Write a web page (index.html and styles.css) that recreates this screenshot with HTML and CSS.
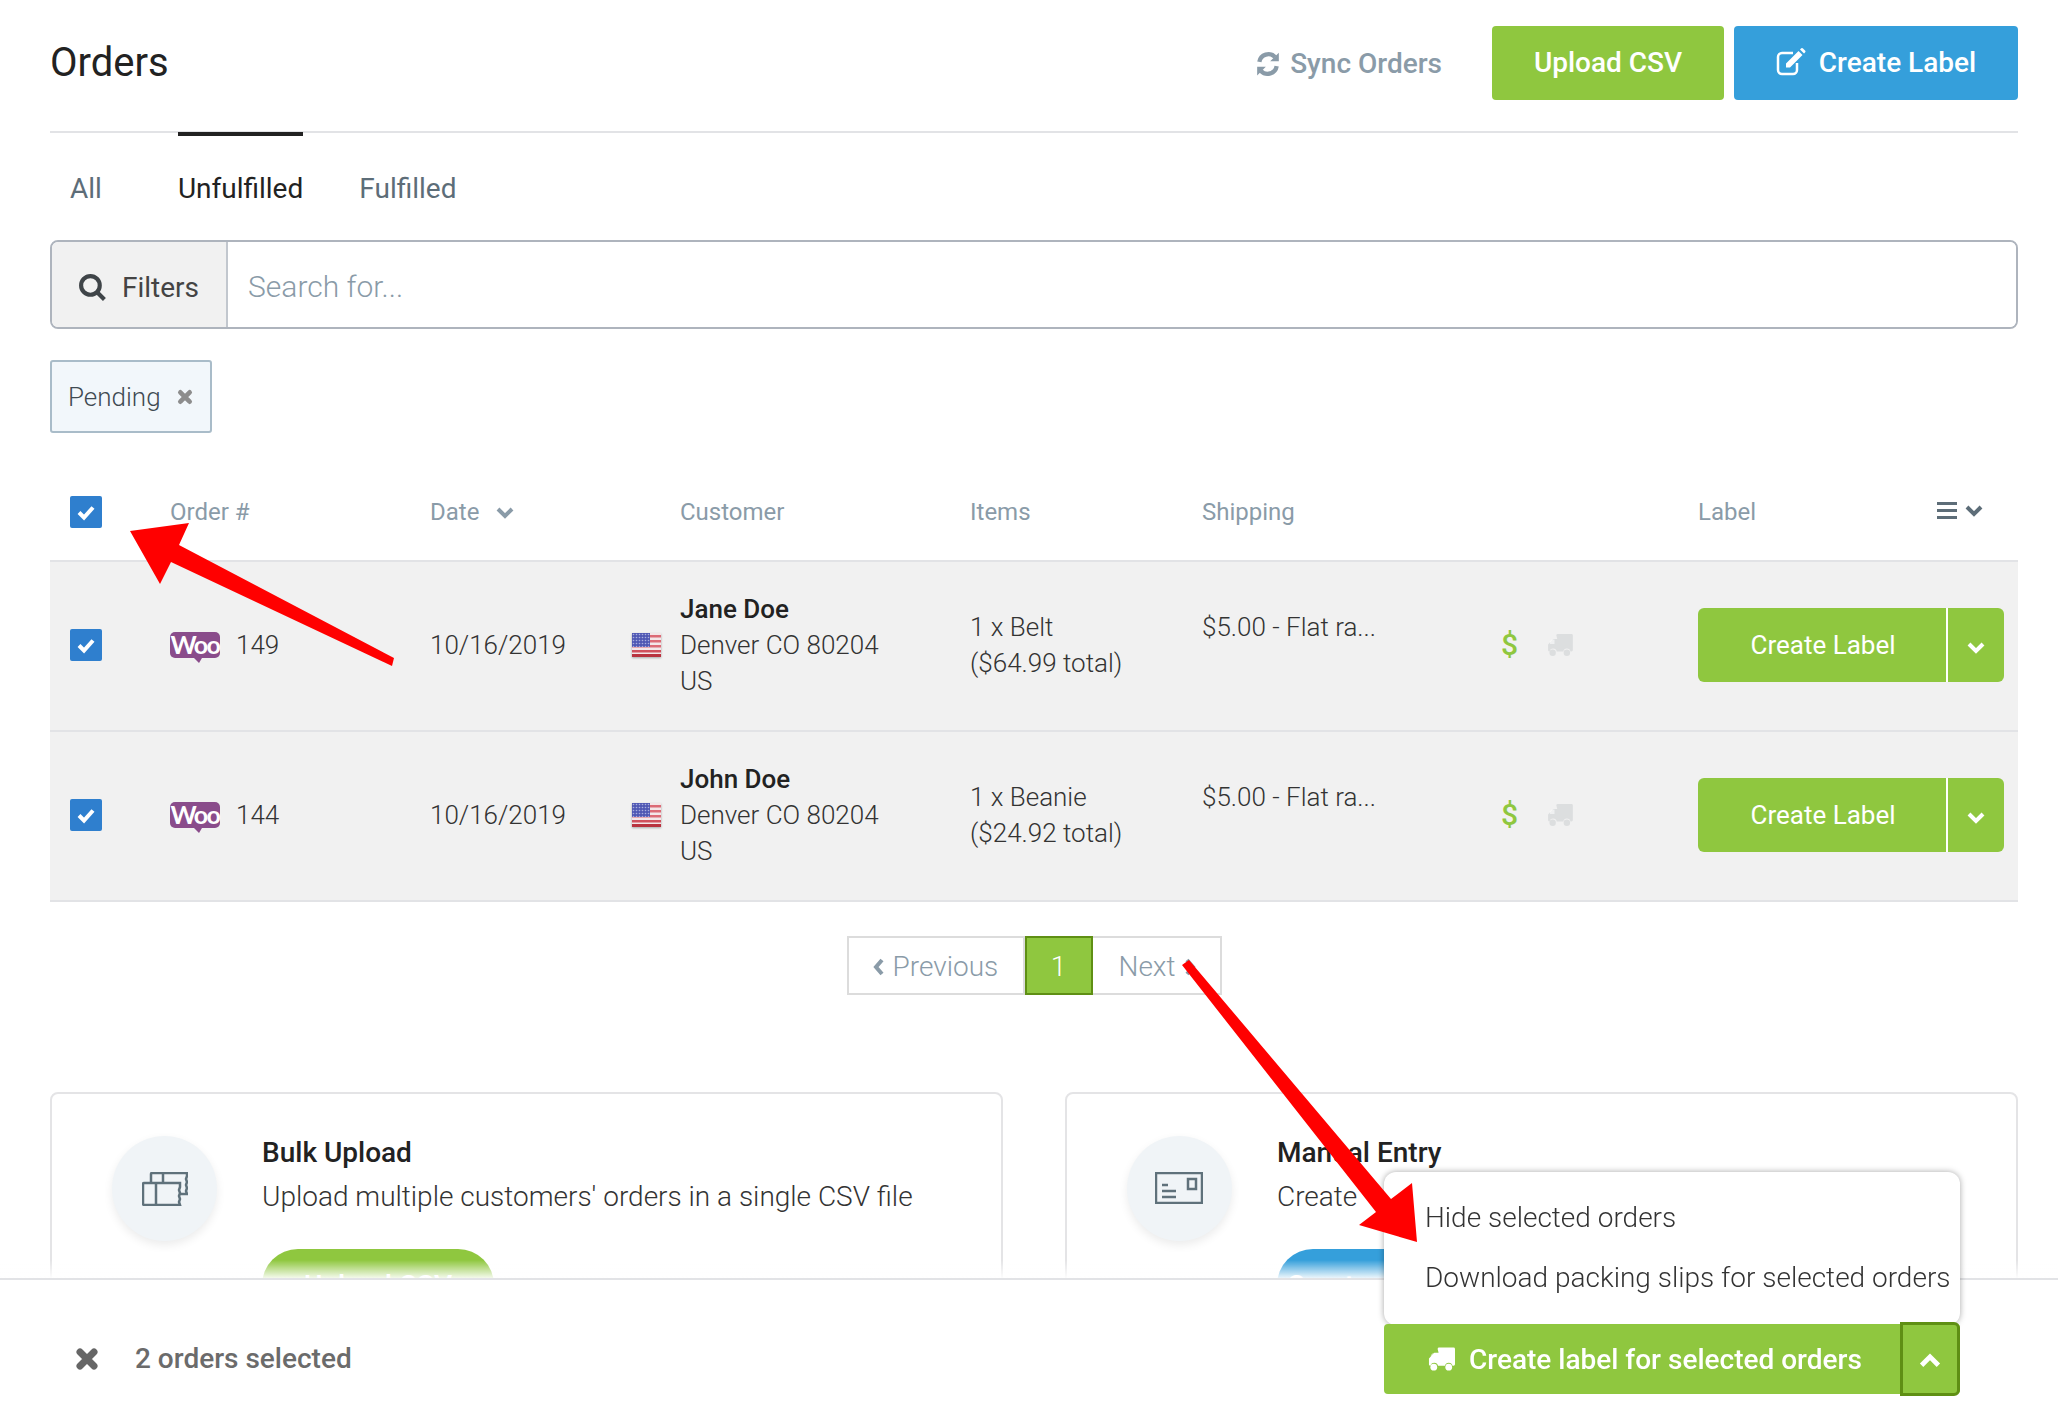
FILE: index.html
```html
<!DOCTYPE html>
<html lang="en">
<head>
    <meta charset="UTF-8">
    <meta name="viewport" content="width=device-width, initial-scale=1.0">
    <title>Orders</title>
    <link rel="stylesheet" href="styles.css">
</head>
<body>
    <svg width="0" height="0" class="sprites">
        <defs>
            <pattern id="stars" width="3" height="3" patternUnits="userSpaceOnUse">
                <rect width="3" height="3" fill="#4f58b4"/>
                <circle cx="1.500" cy="1.500" r=".8" fill="#a9aede"/>
            </pattern>
        </defs>
        <symbol id="truck" viewBox="0 0 28 24">
            <path d="M10 1.500a1.500 1.500 0 0 1 1.500-1.500h15a1.500 1.500 0 0 1 1.500 1.500v16a1.500 1.500 0 0 1-1.500 1.500h-1.100a4 4 0 0 0-7.800 0h-7.200a4 4 0 0 0-7.800 0h-.6a2 2 0 0 1-1-1v-6.500l5.500-6h4.500z"/>
            <path d="M3 7.800v3.200h5v-5h-3.200z" fill="rgba(255,255,255,.55)"/>
            <circle cx="6" cy="20.500" r="3.500"/>
            <circle cx="21.500" cy="20.500" r="3.500"/>
        </symbol>
    </svg>

    <main class="page">
        <header class="page-head">
            <h1>Orders</h1>
            <a class="sync-link">
                <svg class="sync-icon" viewBox="0 0 24 24"><path d="M4 10a8.500 8.500 0 0 1 14.500-4.500M20 14a8.500 8.500 0 0 1-14.500 4.500"/><path class="solid" d="M22 1.500v8h-8zM2 22.500v-8h8z"/></svg>
                Sync Orders
            </a>
            <button class="btn btn-green btn-csv">Upload CSV</button>
            <button class="btn btn-blue btn-label">
                <svg class="edit-icon" viewBox="0 0 30 28"><path d="M21 15v7a4 4 0 0 1-4 4H6a4 4 0 0 1-4-4V9a4 4 0 0 1 4-4h11"/><path class="solid" d="M10 15.500 22.500 3l4 4L14 19.500h-4zM24 1.500l1-1a1.400 1.400 0 0 1 2 0l2 2a1.400 1.400 0 0 1 0 2l-1 1z"/></svg>
                Create Label
            </button>
        </header>

        <nav class="tabs">
            <a class="tab tab-all">All</a>
            <a class="tab active">Unfulfilled</a>
            <a class="tab">Fulfilled</a>
        </nav>

        <div class="search-bar">
            <div class="filters">
                <svg class="search-icon" viewBox="0 0 28 28"><circle cx="12" cy="12" r="9"/><path d="m18.500 18.500 7 7"/></svg>
                Filters
            </div>
            <input class="search-input" type="text" placeholder="Search for...">
        </div>

        <div class="chip">Pending <svg class="x-icon chip-x" viewBox="0 0 24 24"><path d="M5 5l14 14M19 5 5 19"/></svg></div>

        <div class="grid-row table-head">
            <span class="checkbox"><svg viewBox="0 0 32 32"><path d="m9 16.500 5 5 9-10"/></svg></span>
            <span>Order #</span>
            <span>Date <svg class="chev date-chev" viewBox="0 0 20 14"><path d="m3 3 7 7 7-7"/></svg></span>
            <span class="head-customer">Customer</span>
            <span>Items</span>
            <span>Shipping</span>
            <span></span>
            <span>Label</span>
            <svg class="columns-icon" viewBox="0 0 48 20"><path d="M0 2.500h20M0 9.500h20M0 16.500h20"/><path class="columns-chev" d="m30 6 7 7 7-7"/></svg>
        </div>

        <div class="grid-row order-row">
            <span class="checkbox"><svg viewBox="0 0 32 32"><path d="m9 16.500 5 5 9-10"/></svg></span>
            <span class="order-no"><span class="woo">Woo</span> 149</span>
            <span>10/16/2019</span>
            <div class="customer">
                <svg class="flag" viewBox="0 0 29 24"><rect width="29" height="24" fill="#f3e6e8"/><path d="M0 2h29v2.500H0zM0 7h29v2.500H0zM0 12h29v2.500H0z" fill="#dc6b76"/><path d="M0 17h29v2.500H0z" fill="#d0505c"/><path d="M0 21h29v3H0z" fill="#b8323e"/><rect width="18" height="14" fill="url(#stars)"/></svg>
                <div><strong>Jane Doe</strong><br>Denver CO 80204<br>US</div>
            </div>
            <div>1 x Belt<br>($64.99 total)</div>
            <div class="shipping">$5.00 - Flat ra...</div>
            <div class="status-icons"><span class="paid">$</span><svg class="truck-icon"><use href="#truck"/></svg></div>
            <div class="split-btn">
                <button class="split-main">Create Label</button>
                <button class="split-toggle"><svg class="chev" viewBox="0 0 20 14"><path d="m3 3 7 7 7-7"/></svg></button>
            </div>
        </div>

        <div class="grid-row order-row">
            <span class="checkbox"><svg viewBox="0 0 32 32"><path d="m9 16.500 5 5 9-10"/></svg></span>
            <span class="order-no"><span class="woo">Woo</span> 144</span>
            <span>10/16/2019</span>
            <div class="customer">
                <svg class="flag" viewBox="0 0 29 24"><rect width="29" height="24" fill="#f3e6e8"/><path d="M0 2h29v2.500H0zM0 7h29v2.500H0zM0 12h29v2.500H0z" fill="#dc6b76"/><path d="M0 17h29v2.500H0z" fill="#d0505c"/><path d="M0 21h29v3H0z" fill="#b8323e"/><rect width="18" height="14" fill="url(#stars)"/></svg>
                <div><strong>John Doe</strong><br>Denver CO 80204<br>US</div>
            </div>
            <div>1 x Beanie<br>($24.92 total)</div>
            <div class="shipping">$5.00 - Flat ra...</div>
            <div class="status-icons"><span class="paid">$</span><svg class="truck-icon"><use href="#truck"/></svg></div>
            <div class="split-btn">
                <button class="split-main">Create Label</button>
                <button class="split-toggle"><svg class="chev" viewBox="0 0 20 14"><path d="m3 3 7 7 7-7"/></svg></button>
            </div>
        </div>

        <div class="pagination">
            <a class="page-link page-prev"><svg class="page-chev" viewBox="0 0 12 20"><path d="M9 3 3 10l6 7"/></svg> Previous</a>
            <a class="page-link page-current">1</a>
            <a class="page-link page-next">Next <svg class="page-chev" viewBox="0 0 12 20"><path d="m3 3 6 7-6 7"/></svg></a>
        </div>

        <section class="cards">
            <div class="card">
                <div class="card-icon">
                    <svg width="46" height="34" viewBox="0 0 46 34"><path d="M9 10V2a1 1 0 0 1 1-1h35v3l-1 3 1 3-1 3 1 3-1 3 1 3H38M21 1v9"/><path d="M2 11h36v4l-1 3 1 3-1 3 1 3-1 3 1 3H2a1 1 0 0 1-1-1V12a1 1 0 0 1 1-1zM14 11v22"/></svg>
                </div>
                <div class="card-body">
                    <h3>Bulk Upload</h3>
                    <p>Upload multiple customers' orders in a single CSV file</p>
                    <button class="pill pill-green">Upload CSV</button>
                </div>
            </div>
            <div class="card">
                <div class="card-icon">
                    <svg class="card-icon-mail" width="48" height="32" viewBox="0 0 48 32"><path d="M1 1h46v30H1zM33 7h8v10h-8zM7 13h6M7 19h14M7 25h14"/></svg>
                </div>
                <div class="card-body">
                    <h3>Manual Entry</h3>
                    <p>Create</p>
                    <button class="pill pill-blue">Create</button>
                </div>
            </div>
        </section>
    </main>

    <footer class="bulk-bar">
        <svg class="x-icon bulk-x" viewBox="0 0 24 24"><path d="M5 5l14 14M19 5 5 19"/></svg>
        <span class="bulk-count">2 orders selected</span>
        <div class="bulk-actions">
            <ul class="bulk-menu">
                <li>Hide selected orders</li>
                <li>Download packing slips for selected orders</li>
            </ul>
            <div class="bulk-btn">
                <button class="bulk-main"><svg class="bulk-truck"><use href="#truck"/></svg>Create label for selected orders</button>
                <button class="bulk-toggle"><svg class="chev" viewBox="0 0 20 14"><path d="m3 11 7-7 7 7"/></svg></button>
            </div>
        </div>
    </footer>

    <!-- annotation arrows drawn over the screenshot -->
    <svg class="arrows" viewBox="0 0 2058 1414">
        <polygon points="130,531 189,523 179,545 394,658 392,666 171,562 160,584"/>
        <polygon points="1182,965 1189,960 1391,1199 1412,1183 1417,1242 1359,1225 1376,1212"/>
    </svg>
</body>
</html>
```

FILE: styles.css
```css
* {
    box-sizing: border-box;
}
html, body {
    height: 100%;
}
body {
    margin: 0;
    overflow: hidden;
    background: #fff;
    color: #444;
    font-family: Roboto, "Liberation Sans", sans-serif;
    font-size: 28px;
    line-height: 36px;
}
button {
    font-family: inherit;
    font-size: 28px;
    border: none;
    color: #fff;
    padding: 0;
}
svg {
    fill: none;
}
.sprites {
    position: absolute;
}
.page {
    padding: 0 40px 0 50px;
}

/* header */
.page-head {
    display: flex;
    align-items: center;
    padding: 26px 0 31px;
    border-bottom: 2px solid #e2e3e6;
}
h1 {
    margin: 0 auto 0 0;
    color: #222;
    font-size: 40px;
    font-weight: 400;
    line-height: 74px;
}
.sync-link {
    display: flex;
    align-items: center;
    gap: 9px;
    margin: 2px 50px 0 0;
    color: #8a9ba8;
    font-weight: 500;
}
.sync-icon {
    width: 26px;
    height: 26px;
}
.sync-icon path {
    stroke: #8a9ba8;
    stroke-width: 4;
}
.sync-icon .solid {
    fill: #8a9ba8;
    stroke: none;
}
.btn {
    height: 74px;
    padding-bottom: 2px;
    border-radius: 4px;
    font-weight: 500;
}
.btn-green {
    background: #8fc73f;
}
.btn-blue {
    background: #359fdb;
}
.btn-csv {
    width: 232px;
}
.btn-label {
    display: flex;
    align-items: center;
    justify-content: center;
    gap: 13px;
    width: 284px;
    margin-left: 10px;
}
.edit-icon {
    width: 30px;
    height: 28px;
}
.edit-icon path {
    stroke: #fff;
    stroke-width: 2.500;
}
.edit-icon .solid {
    fill: #fff;
    stroke: none;
}

/* tabs */
.tabs {
    display: flex;
    gap: 56px;
    padding-left: 20px;
    margin-bottom: 33px;
}
.tab {
    margin-top: -1px;
    padding-top: 35px;
    border-top: 4px solid transparent;
    color: #5d6d78;
}
.tab-all {
    margin-right: 20px;
}
.tab.active {
    border-top-color: #222;
    color: #222;
}

/* search */
.search-bar {
    display: flex;
    height: 89px;
    border: 2px solid #aeb4bd;
    border-radius: 8px;
    overflow: hidden;
}
.filters {
    display: flex;
    align-items: center;
    gap: 15px;
    width: 176px;
    padding: 6px 0 0 26px;
    background: #f1f1f1;
    border-right: 2px solid #c2c7ce;
    color: #444;
}
.search-icon {
    width: 29px;
    height: 29px;
}
.search-icon circle, .search-icon path {
    stroke: #3f4448;
    stroke-width: 4;
}
.search-input {
    flex: 1;
    padding: 4px 20px 0;
    border: none;
    outline: none;
    font-family: inherit;
    font-size: 30px;
    font-weight: 300;
}
.search-input::placeholder {
    color: #8a9ba8;
    opacity: 1;
}
.chip {
    display: inline-flex;
    align-items: center;
    gap: 16px;
    height: 73px;
    margin-top: 31px;
    padding: 0 17px 0 16px;
    background: #f2f7fb;
    border: 2px solid #a9bcc9;
    border-radius: 3px;
    color: #3f4a52;
    font-size: 26px;
    font-weight: 300;
}
.x-icon path {
    stroke: #8d8d8d;
    stroke-width: 7;
    stroke-linecap: round;
}
.chip-x {
    width: 16px;
    height: 16px;
}

/* table */
.grid-row {
    display: grid;
    grid-template-columns: 100px 260px 202px 338px 232px 299px 197px 1fr;
    align-items: center;
    padding-left: 20px;
    border-bottom: 2px solid #e2e3e6;
}
.table-head {
    position: relative;
    height: 129px;
    padding-top: 49px;
    padding-bottom: 18px;
    color: #8a9ba8;
    font-size: 24px;
}
.head-customer {
    padding-left: 48px;
}
.date-chev {
    margin-left: 10px;
}
.columns-icon {
    position: absolute;
    right: 33px;
    top: 68px;
    width: 48px;
    height: 20px;
}
.columns-icon path {
    stroke: #5d6d78;
    stroke-width: 3;
}
.columns-icon .columns-chev {
    stroke-width: 4;
}
.chev {
    width: 20px;
    height: 14px;
}
.chev path {
    stroke: currentColor;
    stroke-width: 4;
}
.checkbox {
    display: block;
    width: 32px;
    height: 32px;
    background: #2f7fce;
    border-radius: 2px;
}
.checkbox svg {
    display: block;
}
.checkbox path {
    stroke: #fff;
    stroke-width: 4;
}
.order-row {
    height: 170px;
    padding-bottom: 2px;
    background: #f1f1f1;
    font-size: 26px;
    font-weight: 300;
    color: #333;
}
.order-no {
    display: flex;
    align-items: center;
    gap: 16px;
}
.woo {
    position: relative;
    width: 50px;
    height: 26px;
    background: #8a4c8b;
    border-radius: 5px;
    color: #fff;
    font-family: Lato, sans-serif;
    font-size: 25px;
    font-weight: 700;
    letter-spacing: -1.500px;
    line-height: 24px;
    text-align: center;
}
.woo::after {
    content: "";
    position: absolute;
    left: 24px;
    bottom: -5px;
    border-top: 5px solid #8a4c8b;
    border-left: 5px solid transparent;
    border-right: 3px solid transparent;
}
.customer {
    display: flex;
    align-items: center;
    gap: 19px;
}
.customer strong {
    color: #222;
    font-weight: 500;
}
.flag {
    flex: none;
    width: 29px;
    height: 24px;
    filter: drop-shadow(0 1px 1px rgba(0, 0, 0, .3));
}
.shipping {
    padding-bottom: 36px;
}
.status-icons {
    display: flex;
    align-items: center;
    gap: 30px;
}
.paid {
    width: 16px;
    color: #8fc73f;
    font-size: 30px;
    font-weight: 500;
}
.truck-icon {
    width: 26px;
    height: 22px;
    fill: #dcdedf;
}
.split-btn {
    display: flex;
    width: 306px;
    height: 74px;
    background: #8fc73f;
    border-radius: 6px;
}
.split-main {
    width: 250px;
    padding-left: 2px;
    background: none;
    border-right: 2px solid #fff;
    font-size: 26px;
}
.split-toggle {
    flex: 1;
    background: none;
}

/* pagination */
.pagination {
    display: flex;
    justify-content: center;
    margin-top: 34px;
    color: #8a9ba8;
    font-weight: 300;
}
.page-link {
    display: flex;
    align-items: center;
    gap: 8px;
    height: 59px;
    padding-top: 2px;
    border: 2px solid #dcdcdc;
}
.page-prev {
    width: 178px;
    padding-left: 24px;
}
.page-current {
    justify-content: center;
    width: 68px;
    background: #8fc73f;
    border-color: #5f8f14;
    color: #fff;
}
.page-next {
    width: 129px;
    padding-left: 26px;
    border-left: none;
}
.page-chev {
    width: 12px;
    height: 20px;
}
.page-chev path {
    stroke: #8a9ba8;
    stroke-width: 4;
}

/* cards */
.cards {
    display: flex;
    gap: 62px;
    margin-top: 97px;
}
.card {
    display: flex;
    flex: 1;
    gap: 45px;
    height: 300px;
    padding: 42px 0 0 60px;
    border: 2px solid #e4e4e6;
    border-radius: 8px;
}
.card-icon {
    display: flex;
    align-items: center;
    justify-content: center;
    flex: none;
    width: 105px;
    height: 105px;
    background: #f0f4f7;
    border-radius: 50%;
    box-shadow: 0 4px 10px rgba(0, 0, 0, .08);
}
.card-icon path {
    stroke: #5f717b;
    stroke-width: 2.500;
}
.card-icon-mail {
    margin: 0 2px 2px 0;
}
.card-body h3 {
    margin: -1px 0 0;
    color: #222;
    font-size: 28px;
    font-weight: 500;
    line-height: 36px;
}
.card-body p {
    margin: 8px 0 0;
    color: #333;
    font-weight: 300;
}
.pill {
    display: block;
    width: 232px;
    height: 72px;
    margin-top: 34px;
    border-radius: 36px;
    font-weight: 500;
}
.pill-green {
    background: #8fc73f;
}
.pill-blue {
    padding-right: 130px;
    background: #359fdb;
}

/* bottom bar */
.bulk-bar {
    position: fixed;
    left: 0;
    right: 0;
    bottom: 0;
    display: flex;
    align-items: center;
    height: 136px;
    padding: 24px 98px 0 75px;
    background: #fff;
    border-top: 2px solid #e2e3e6;
}
.bulk-bar::before {
    content: "";
    position: absolute;
    left: 0;
    right: 0;
    top: -20px;
    height: 18px;
    background: linear-gradient(rgba(255, 255, 255, 0), rgba(255, 255, 255, .9));
}
.bulk-x {
    width: 24px;
    height: 24px;
}
.bulk-x path {
    stroke: #666;
}
.bulk-count {
    margin-left: 36px;
    color: #6b6b6b;
    font-weight: 500;
}
.bulk-actions {
    position: relative;
    margin-left: auto;
    width: 576px;
}
.bulk-menu {
    position: absolute;
    left: 0;
    right: 0;
    bottom: 69px;
    height: 153px;
    margin: 0;
    padding: 28px 0 0 41px;
    list-style: none;
    background: #fff;
    border-radius: 12px;
    box-shadow: 0 0 6px rgba(0, 0, 0, .35);
    color: #333;
    font-weight: 300;
    white-space: nowrap;
}
.bulk-menu li {
    height: 60px;
}
.bulk-btn {
    position: relative;
    display: flex;
    height: 70px;
    background: #8fc73f;
    border-radius: 4px;
}
.bulk-main {
    display: flex;
    align-items: center;
    gap: 14px;
    width: 516px;
    padding-left: 44px;
    background: none;
    font-weight: 500;
}
.bulk-truck {
    width: 27px;
    height: 24px;
    fill: #fff;
}
.bulk-toggle {
    position: absolute;
    right: 0;
    top: -2px;
    width: 60px;
    height: 74px;
    background: none;
    border: 3px solid #5f8f14;
    border-radius: 0 6px 6px 0;
}
.bulk-toggle .chev {
    width: 24px;
    height: 17px;
}

/* red arrows */
.arrows {
    position: fixed;
    left: 0;
    top: 0;
    width: 2058px;
    height: 1414px;
    fill: #ff0000;
    pointer-events: none;
}
```
